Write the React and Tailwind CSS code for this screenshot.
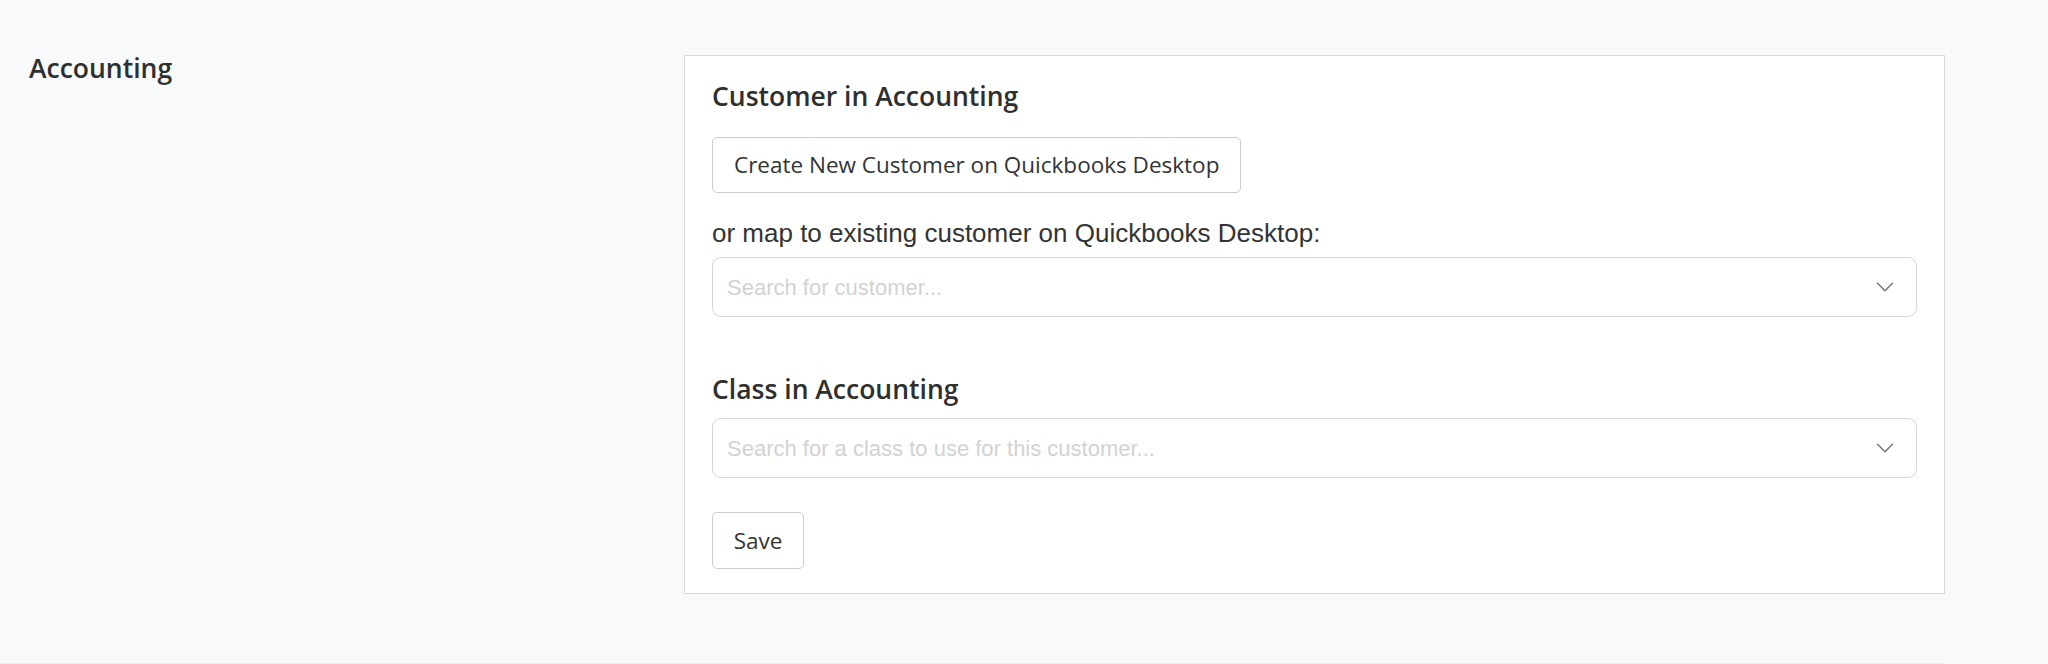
import React from "react";
import { ChevronDown } from "lucide-react";

const heading = "font-['Open_Sans',sans-serif] font-semibold text-[26.5px] leading-[32px] text-[#2f2f2f]";

const SearchSelect = ({ placeholder, className = "" }) => (
  <div
    className={`flex items-center justify-between h-[60px] w-full rounded-[9px] border border-[#d3d7dc] bg-white pl-[14px] pr-[16px] ${className}`}
  >
    <span className="font-['Liberation_Sans',Arial,sans-serif] text-[22px] text-[#d2d2d2]">
      {placeholder}
    </span>
    <ChevronDown size={30} strokeWidth={1.3} className="text-[#7a7a7a]" />
  </div>
);

const App = () => {
  return (
    <div className="min-h-[664px] w-full bg-[#f8f9fa]">
      <div className="flex w-[1945px] h-[664px] border-b border-[#ececec]">
        {/* Section title */}
        <div className="w-[684px] shrink-0 pl-[29px] pt-[52px]">
          <h2 className={heading}>Accounting</h2>
        </div>

        {/* Settings card */}
        <div className="mt-[55px] h-[539px] w-[1261px] bg-white border border-[#d9d9d9] px-[27px] pt-[24px]">
          <h3 className={heading}>Customer in Accounting</h3>

          <button className="mt-[25px] h-[56px] px-[21px] rounded-[5px] border border-[#cccccc] bg-white font-['Open_Sans',sans-serif] text-[22.5px] text-[#333333]">
            Create New Customer on Quickbooks Desktop
          </button>

          <p className="mt-[25px] font-['Liberation_Sans',Arial,sans-serif] text-[26px] leading-[30px] text-[#333333]">
            or map to existing customer on Quickbooks Desktop:
          </p>

          <SearchSelect placeholder="Search for customer..." className="mt-[9px]" />

          <h3 className={`${heading} mt-[56px]`}>Class in Accounting</h3>

          <SearchSelect
            placeholder="Search for a class to use for this customer..."
            className="mt-[13px]"
          />

          <button className="mt-[34px] h-[57px] w-[92px] rounded-[5px] border border-[#cccccc] bg-white font-['Open_Sans',sans-serif] text-[22.5px] text-[#333333]">
            Save
          </button>
        </div>
      </div>
    </div>
  );
};

export default App;
